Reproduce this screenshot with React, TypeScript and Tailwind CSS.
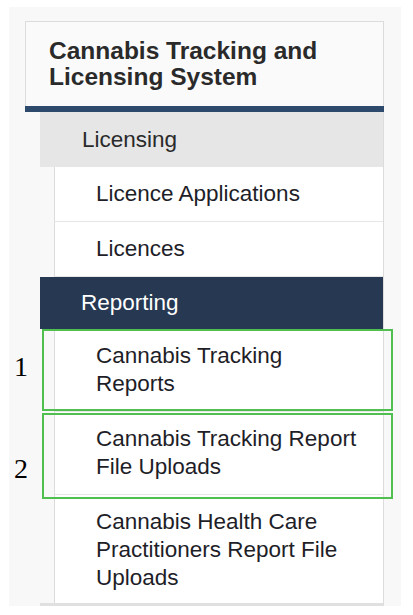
import React from 'react';

const font = { fontFamily: '"Liberation Sans", Arial, sans-serif' };

const subItems = [
  'Licence Applications',
  'Licences',
];

const reportItems = [
  'Cannabis Tracking Reports',
  'Cannabis Tracking Report File Uploads',
  'Cannabis Health Care Practitioners Report File Uploads',
];

function SubItem({ label }: { label: string }) {
  return (
    <div className="ml-[14px] border-l border-b border-l-[#dcdcdc] border-b-[#e6e6e6] bg-white pl-[41px] pr-[20px] py-[13px]">
      <span className="block text-[22.5px] leading-[28px] text-[#1e1e28]">{label}</span>
    </div>
  );
}

export default function App() {
  return (
    <div className="relative w-[413px] h-[615px] bg-white overflow-hidden" style={font}>
      <div className="ml-[9px] mt-[7px] w-[392px] bg-[#f8f8f8] pt-[14px] pl-[16px] pr-[17px]">
        {/* Header card */}
        <div className="border border-b-0 border-[#dcdcdc] bg-[#fafafa] pl-[23px] pr-4 pt-[16px] pb-[16px]">
          <h1 className="text-[24.5px] leading-[26px] font-bold text-[#2a2a2a]">
            Cannabis Tracking and
            <br />
            Licensing System
          </h1>
        </div>
        <div className="h-[6px] bg-[#2d4a6d]" />

        {/* Nav */}
        <div className="ml-[15px] border-r border-b-[3px] border-r-[#dcdcdc] border-b-[#e0e0e0]">
          <div className="bg-[#e6e6e6] pl-[42px] py-[13.5px] text-[22.5px] leading-[28px] text-[#2a2a2a]">
            Licensing
          </div>
          {subItems.map((s) => (
            <SubItem key={s} label={s} />
          ))}
          <div className="bg-[#263852] pl-[41px] py-[12px] text-[22.5px] leading-[28px] text-white">
            Reporting
          </div>
          <div className="ml-[14px] border-l border-b border-l-[#dcdcdc] border-b-[#e6e6e6] bg-white pl-[41px] py-[13px]">
            <span className="block w-[230px] text-[22.5px] leading-[28px] text-[#1e1e28]">{reportItems[0]}</span>
          </div>
          <div className="ml-[14px] border-l border-b border-l-[#dcdcdc] border-b-[#e6e6e6] bg-white pl-[41px] py-[13px]">
            <span className="block w-[270px] text-[22.5px] leading-[28px] text-[#1e1e28]">{reportItems[1]}</span>
          </div>
          <div className="ml-[14px] border-l border-l-[#dcdcdc] bg-white pl-[41px] pt-[13px] pb-[11px]">
            <span className="block w-[250px] text-[22.5px] leading-[28px] text-[#1e1e28]">{reportItems[2]}</span>
          </div>
        </div>
      </div>

      {/* Annotation overlays */}
      <div className="absolute left-[42px] top-[329px] w-[351px] h-[82px] border-2 border-[#4fbf4f]" />
      <div className="absolute left-[42px] top-[413px] w-[351px] h-[86px] border-2 border-[#4fbf4f]" />
      <span
        className="absolute left-[14px] top-[351px] text-[28px] leading-[32px] text-black"
        style={{ fontFamily: '"Liberation Serif", "Times New Roman", serif' }}
      >
        1
      </span>
      <span
        className="absolute left-[14px] top-[453px] text-[28px] leading-[32px] text-black"
        style={{ fontFamily: '"Liberation Serif", "Times New Roman", serif' }}
      >
        2
      </span>
    </div>
  );
}
